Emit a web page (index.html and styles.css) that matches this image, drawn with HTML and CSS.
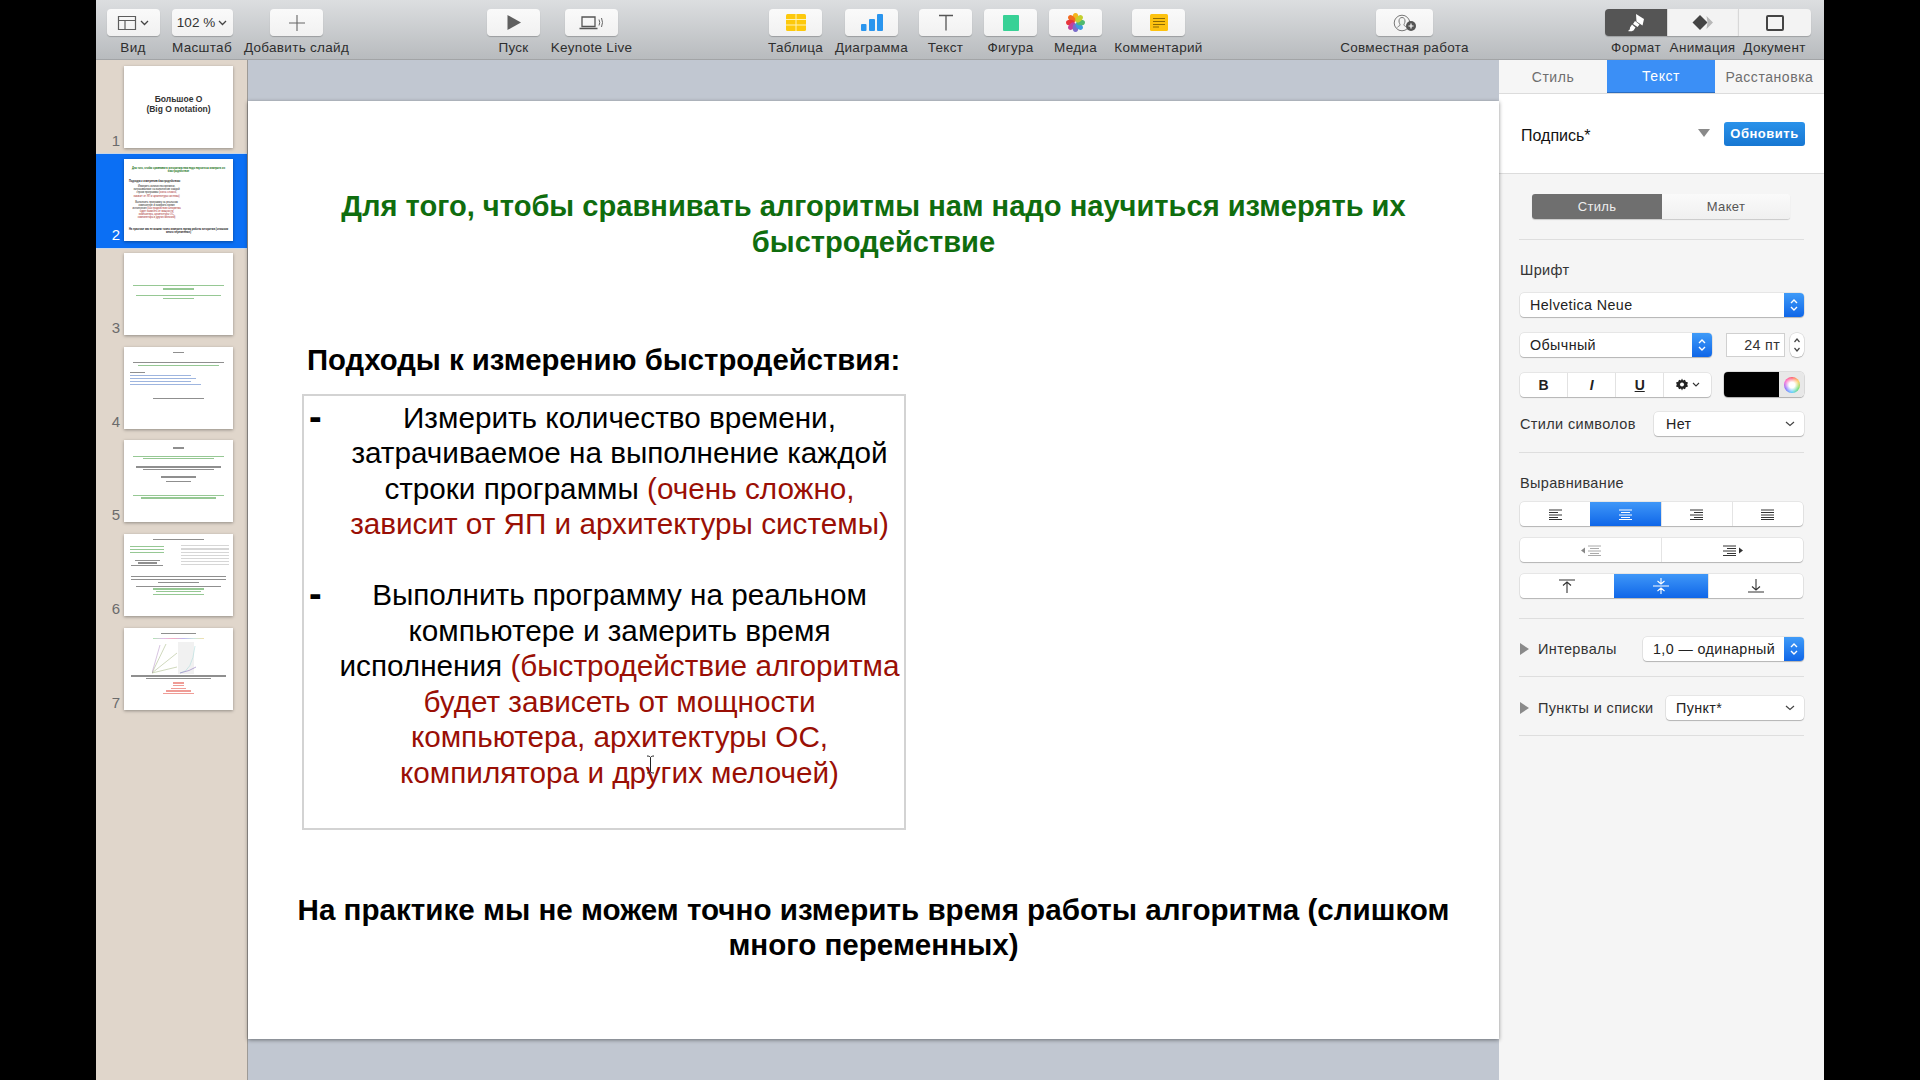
FILE: index.html
```html
<!DOCTYPE html>
<html lang="ru">
	<head>
		<meta charset="UTF-8">
		<title>Keynote</title>
		<link rel="stylesheet" href="styles.css">
	</head>
	<body>
		<div class="window">
			<!-- toolbar -->
			<header class="toolbar">
				<div class="tb-group tb-left">
					<div class="tool">
						<div class="tb-btn">
							<svg width="20" height="18" viewBox="0 0 20 18"><path d="M1.5 2.500h17v13h-17zM1.500 6.500h17M8 6.500v9" fill="none" stroke="#5d5d5d" stroke-width="1.2"/></svg>
							<svg class="chev" width="9" height="6" viewBox="0 0 9 6"><path d="M1 1l3.500 3.500L8 1" fill="none" stroke="#444" stroke-width="1.3"/></svg>
						</div>
						<span>Вид</span>
					</div>
					<div class="tool">
						<div class="tb-btn wide">102 %<svg class="chev" width="9" height="6" viewBox="0 0 9 6"><path d="M1 1l3.500 3.500L8 1" fill="none" stroke="#444" stroke-width="1.3"/></svg></div>
						<span>Масштаб</span>
					</div>
					<div class="tool">
						<div class="tb-btn">
							<svg width="18" height="18" viewBox="0 0 18 18"><path d="M9 1v16M1 9h16" stroke="#666" stroke-width="1.1"/></svg>
						</div>
						<span>Добавить слайд</span>
					</div>
				</div>
				<div class="tb-group tb-run">
					<div class="tool">
						<div class="tb-btn">
							<svg width="16" height="17" viewBox="0 0 16 17"><path d="M1.500 1l13.500 7.500L1.500 16z" fill="#5f5f5f"/></svg>
						</div>
						<span>Пуск</span>
					</div>
					<div class="tool">
						<div class="tb-btn">
							<svg width="28" height="16" viewBox="0 0 28 16"><path d="M4 2h13v9.500H4z" fill="none" stroke="#555" stroke-width="1.3"/><path d="M1.500 13.500h18" stroke="#555" stroke-width="1.5"/><path d="M21 4.500q1.500 3 0 6M23.500 3q2 4.500 0 9" fill="none" stroke="#666"/></svg>
						</div>
						<span>Keynote Live</span>
					</div>
				</div>
				<div class="tb-group tb-insert">
					<div class="tool">
						<div class="tb-btn">
							<svg width="20" height="17" viewBox="0 0 20 17"><rect width="20" height="17" rx="1.500" fill="#fdc90c"/><path d="M0 5.500h20M0 11h20M10 0v17" stroke="#fff3b8"/></svg>
						</div>
						<span>Таблица</span>
					</div>
					<div class="tool">
						<div class="tb-btn">
							<svg width="22" height="17" viewBox="0 0 22 17"><rect y="10" width="5.500" height="7" rx="1" fill="#2a95ee"/><rect x="8" y="5" width="6" height="12" rx="1" fill="#2a95ee"/><rect x="16" width="6" height="17" rx="1" fill="#2a95ee"/></svg>
						</div>
						<span>Диаграмма</span>
					</div>
					<div class="tool">
						<div class="tb-btn">
							<svg width="16" height="17" viewBox="0 0 16 17"><path d="M1 1.500h14M8 1.500V16.500" stroke="#555" stroke-width="1.3" fill="none"/></svg>
						</div>
						<span>Текст</span>
					</div>
					<div class="tool">
						<div class="tb-btn"><div class="shape-ico"></div></div>
						<span>Фигура</span>
					</div>
					<div class="tool">
						<div class="tb-btn">
							<svg width="19" height="19" viewBox="-10 -10 20 20">
								<ellipse cy="-5.500" rx="3" ry="4.500" fill="#f4b41b"/>
								<ellipse cy="-5.500" rx="3" ry="4.500" fill="#f26b21" transform="rotate(315)"/>
								<ellipse cy="-5.500" rx="3" ry="4.500" fill="#e8353b" transform="rotate(270)"/>
								<ellipse cy="-5.500" rx="3" ry="4.500" fill="#c2409c" transform="rotate(225)"/>
								<ellipse cy="-5.500" rx="3" ry="4.500" fill="#7a6ccb" transform="rotate(180)"/>
								<ellipse cy="-5.500" rx="3" ry="4.500" fill="#3d9ae0" transform="rotate(135)"/>
								<ellipse cy="-5.500" rx="3" ry="4.500" fill="#4fba6f" transform="rotate(90)"/>
								<ellipse cy="-5.500" rx="3" ry="4.500" fill="#c3cf2f" transform="rotate(45)"/>
							</svg>
						</div>
						<span>Медиа</span>
					</div>
					<div class="tool">
						<div class="tb-btn">
							<svg width="18" height="17" viewBox="0 0 18 17"><rect width="18" height="17" rx="1.500" fill="#fdc20f"/><path d="M3 4.500h12M3 7.500h12M3 10.500h12M3 13h6" stroke="#8d6a05"/></svg>
						</div>
						<span>Комментарий</span>
					</div>
				</div>
				<div class="tb-group tb-collab">
					<div class="tool">
						<div class="tb-btn wide-2">
							<svg width="24" height="18" viewBox="0 0 24 18"><circle cx="9" cy="9" r="7.800" fill="none" stroke="#777"/><path d="M9 3.500c2 0 3 1.500 3 3.500 0 2-1 3-1.200 4 .5 1 2.500 1.500 3 2.500M9 3.500c-2 0-3 1.500-3 3.500 0 2 1 3 1.200 4-.5 1-2.500 1.500-3 2.500" fill="none" stroke="#777"/><circle cx="18" cy="12" r="5" fill="#555"/><path d="M15.500 12h5M18 9.500v5" stroke="#fff" stroke-width="1.200"/></svg>
						</div>
						<span>Совместная работа</span>
					</div>
				</div>
				<div class="tb-group tb-panels">
					<div class="tool">
						<div class="panel-btn on first">
							<svg width="20" height="20" viewBox="0 0 20 20"><path d="M10 1l8 5-1.500 6.500-6-4z" fill="#fff"/><path d="M9 8l4.500 3.500-2 2.500-4.500-3zM6 11.500l3.500 3-2 3c-1.500 1-4.500 1-5.500.5 1.500-1 2-1.500 2-3.500z" fill="#fff"/></svg>
						</div>
						<span>Формат</span>
					</div>
					<div class="tool">
						<div class="panel-btn">
							<svg width="22" height="15" viewBox="0 0 22 15"><path d="M8 0l7.500 7.500L8 15 .5 7.500z" fill="#444"/><path d="M14.500 1l6.500 6.500-6.500 6.500 1-6.500z" fill="#b8b8b8"/></svg>
						</div>
						<span>Анимация</span>
					</div>
					<div class="tool">
						<div class="panel-btn last">
							<svg width="18" height="16" viewBox="0 0 18 16"><rect x="1" y="1" width="16" height="14" rx="1" fill="none" stroke="#444" stroke-width="2"/></svg>
						</div>
						<span>Документ</span>
					</div>
				</div>
			</header>

			<div class="main">
				<!-- slide list -->
				<aside class="slides">
					<div class="row">
						<span class="num">1</span>
						<div class="thumb thumb-first">Большое О<br>(Big O notation)</div>
					</div>
					<div class="row selected">
						<span class="num">2</span>
						<div class="thumb thumb-two">
							<p class="t-green">Для того, чтобы сравнивать алгоритмы нам надо научиться измерять их<br>быстродействие</p>
							<p class="t-sub">Подходы к измерению быстродействия:</p>
							<p class="t-body">Измерить количество времени,<br>затрачиваемое на выполнение каждой<br>строки программы <i>(очень сложно,<br>зависит от ЯП и архитектуры системы)</i><br><br>Выполнить программу на реальном<br>компьютере и замерить время<br>исполнения <i>(быстродействие алгоритма<br>будет зависеть от мощности<br>компьютера, архитектуры ОС,<br>компилятора и других мелочей)</i></p>
							<p class="t-foot">На практике мы не можем точно измерить время работы алгоритма (слишком<br>много переменных)</p>
						</div>
					</div>
					<div class="row">
						<span class="num">3</span>
						<div class="thumb">
							<b class="gl green w90 m30"></b><b class="gl green w30 m2"></b>
							<b class="gl green w85 m5"></b><b class="gl green w30 m2"></b>
						</div>
					</div>
					<div class="row">
						<span class="num">4</span>
						<div class="thumb">
							<b class="gl black w10 m5"></b>
							<b class="gl black w90 m9"></b><b class="gl green w80 m1"></b>
							<b class="gl black w15 left m6"></b>
							<b class="gl blue w60 left m2"></b><b class="gl blue w65 left m1"></b>
							<b class="gl blue w60 left m2"></b><b class="gl blue w70 left m1"></b>
							<b class="gl black w50 m13"></b>
						</div>
					</div>
					<div class="row">
						<span class="num">5</span>
						<div class="thumb">
							<b class="gl black w10 m7"></b>
							<b class="gl green w90 m7"></b><b class="gl green w70 m1"></b>
							<b class="gl black w85 m7"></b><b class="gl black w70 m1"></b>
							<b class="gl black w35 m6"></b><b class="gl black w25 m3"></b>
							<b class="gl green w90 m13"></b><b class="gl green w75 m1"></b>
						</div>
					</div>
					<div class="row">
						<span class="num">6</span>
						<div class="thumb thumb-six">
							<b class="gl black w50 m5"></b>
							<div class="six-cols">
								<div class="six-left">
									<b class="gl green w90"></b><b class="gl green w90 m1"></b><b class="gl green w90 m1"></b>
									<b class="gl black w65 m7"></b><b class="gl black w50 m1"></b><b class="gl black w85 m1"></b>
								</div>
								<div class="six-table">
									<b class="gl gray w100"></b><b class="gl gray w100 m2"></b><b class="gl gray w100 m2"></b>
									<b class="gl gray w100 m2"></b><b class="gl gray w100 m2"></b><b class="gl gray w100 m2"></b><b class="gl gray w100 m2"></b>
								</div>
							</div>
							<b class="gl black w95 m6"></b><b class="gl black w95 m1"></b><b class="gl black w40 m1"></b>
							<b class="gl black w85 m3"></b>
							<b class="gl green w50 m1"></b><b class="gl green w45 m1"></b><b class="gl green w50 m1"></b>
						</div>
					</div>
					<div class="row">
						<span class="num">7</span>
						<div class="thumb">
							<b class="gl black w35 m5"></b>
							<b class="gl rainbow w50 m4"></b>
							<svg class="mini-chart" width="54" height="32" viewBox="0 0 54 32">
								<rect x="26" width="16" height="32" fill="#f1f1f1"/>
								<path d="M0 31L14 2M0 31L25 11M0 31L25 25" fill="none" stroke="#9fb07b" stroke-width=".5"/>
								<path d="M0 31L8 3" fill="none" stroke="#b08bc2" stroke-width=".5"/>
								<path d="M28 31Q40 30 43 4" fill="none" stroke="#a5d8d8" stroke-width=".5"/>
								<path d="M28 31Q38 29 44 25" fill="none" stroke="#7b5fb5" stroke-width=".5"/>
							</svg>
							<b class="gl black w95 m1"></b><b class="gl black w65 m1"></b>
							<b class="gl red w10 m3"></b><b class="gl red w10 m1"></b><b class="gl red w15 m1"></b><b class="gl red w25 m1"></b><b class="gl red w30 m1"></b>
						</div>
					</div>
				</aside>

				<!-- slide canvas -->
				<main class="canvas">
					<section class="slide">
						<h1 class="slide-title">Для того, чтобы сравнивать алгоритмы нам надо научиться измерять их<br>быстродействие</h1>
						<h2 class="slide-sub">Подходы к измерению быстродействия:</h2>
						<div class="textbox">
							<div class="item">
								<span class="dash">-</span>
								<p>Измерить количество времени,<br>затрачиваемое на выполнение каждой<br>строки программы <em>(очень сложно,<br>зависит от ЯП и архитектуры системы)</em></p>
							</div>
							<div class="item item-gap">
								<span class="dash">-</span>
								<p>Выполнить программу на реальном<br>компьютере и замерить время<br>исполнения <em>(быстродействие алгоритма<br>будет зависеть от мощности<br>компьютера, архитектуры ОС,<br>компилятора и других мелочей)</em></p>
							</div>
						</div>
						<h2 class="slide-foot">На практике мы не можем точно измерить время работы алгоритма (слишком<br>много переменных)</h2>
						<svg class="ibeam" width="9" height="19" viewBox="0 0 9 19"><path d="M1 1c2 0 3 .5 3.500 1.500C5 1.500 6 1 8 1M4.500 2.500v14M1 18c2 0 3-.5 3.500-1.500C5 17.500 6 18 8 18" fill="none" stroke="#222"/></svg>
					</section>
				</main>

				<!-- inspector -->
				<aside class="inspector">
					<div class="tabs">
						<div class="tab t1">Стиль</div>
						<div class="tab t2 active">Текст</div>
						<div class="tab t3">Расстановка</div>
					</div>
					<div class="preset">
						<span class="preset-name">Подпись*</span>
						<i class="tri-down"></i>
						<button class="update">Обновить</button>
					</div>
					<div class="pane">
						<div class="seg seg-main">
							<div class="seg-cell dark">Стиль</div>
							<div class="seg-cell">Макет</div>
						</div>
						<hr class="sep sep-a">
						<div class="label label-font">Шрифт</div>
						<div class="select">Helvetica Neue<span class="stepper"><svg width="10" height="16" viewBox="0 0 10 16"><path d="M2 6l3-3 3 3M2 10l3 3 3-3" fill="none" stroke="#fff" stroke-width="1.400"/></svg></span></div>
						<div class="line line-style">
							<div class="select select-style">Обычный<span class="stepper"><svg width="10" height="16" viewBox="0 0 10 16"><path d="M2 6l3-3 3 3M2 10l3 3 3-3" fill="none" stroke="#fff" stroke-width="1.400"/></svg></span></div>
							<div class="size">24 пт</div>
							<div class="updown"><svg width="10" height="20" viewBox="0 0 10 20"><path d="M2.500 7l2.500-3 2.500 3M2.500 13l2.500 3 2.500-3" fill="none" stroke="#444" stroke-width="1.200"/></svg></div>
						</div>
						<div class="line line-biu">
							<div class="biu">
								<div class="biu-cell bold">B</div>
								<div class="biu-cell ital">I</div>
								<div class="biu-cell under">U</div>
								<div class="biu-cell">
									<svg width="26" height="15" viewBox="0 0 26 15"><path d="M7 1.500l1 2 2-.8.800 2 2.200.8-.8 2 .8 2-2.200.8-.8 2-2-.8-1 2-1-2-2 .8-.8-2-2.200-.8.8-2-.8-2 2.200-.8.800-2 2 .8z" fill="#222"/><circle cx="7" cy="7.500" r="2" fill="#fff"/><path d="M18 6l3 3 3-3" fill="none" stroke="#333" stroke-width="1.100"/></svg>
								</div>
							</div>
							<div class="swatch"><div class="swatch-black"></div><div class="swatch-wheel"><i></i></div></div>
						</div>
						<div class="line line-chars">
							<span class="label">Стили символов</span>
							<div class="select select-chars">Нет<svg class="sel-chev" width="10" height="6" viewBox="0 0 10 6"><path d="M1 1l4 3.500L9 1" fill="none" stroke="#444" stroke-width="1.200"/></svg></div>
						</div>
						<hr class="sep sep-b">
						<div class="label label-align">Выравнивание</div>
						<div class="btn-row">
							<div class="cell"><svg width="13" height="11" viewBox="0 0 13 11"><path d="M0 1h13M0 3.500h9M0 6h13M0 8.500h9M0 10.500h13" stroke="#333"/></svg></div>
							<div class="cell on"><svg width="13" height="11" viewBox="0 0 13 11"><path d="M0 1h13M2 3.500h9M0 6h13M2 8.500h9M0 10.500h13" stroke="#fff"/></svg></div>
							<div class="cell"><svg width="13" height="11" viewBox="0 0 13 11"><path d="M0 1h13M4 3.500h9M0 6h13M4 8.500h9M0 10.500h13" stroke="#333"/></svg></div>
							<div class="cell"><svg width="13" height="11" viewBox="0 0 13 11"><path d="M0 1h13M0 3.500h13M0 6h13M0 8.500h13M0 10.500h13" stroke="#333"/></svg></div>
						</div>
						<div class="btn-row">
							<div class="cell"><svg width="20" height="11" viewBox="0 0 20 11"><path d="M0 5.500L4 2.500v6z" fill="#888"/><path d="M7 1h13M9 3.500h9M7 6h13M9 8.500h9M7 10.500h13" stroke="#aaa"/></svg></div>
							<div class="cell"><svg width="20" height="11" viewBox="0 0 20 11"><path d="M20 5.500L16 2.500v6z" fill="#333"/><path d="M0 1h13M4 3.500h9M0 6h13M4 8.500h9M0 10.500h13" stroke="#333"/></svg></div>
						</div>
						<div class="btn-row">
							<div class="cell"><svg width="16" height="14" viewBox="0 0 16 14"><path d="M0 1h16M8 14V3M4 6.500L8 3l4 3.500" fill="none" stroke="#333" stroke-width="1.100"/></svg></div>
							<div class="cell on"><svg width="16" height="16" viewBox="0 0 16 16"><path d="M0 8h16M8 0v6M8 10v6M4.500 3L8 6l3.500-3M4.500 13L8 10l3.500 3" fill="none" stroke="#fff" stroke-width="1.100"/></svg></div>
							<div class="cell"><svg width="16" height="14" viewBox="0 0 16 14"><path d="M0 13h16M8 0v11M4 7.500L8 11l4-3.500" fill="none" stroke="#333" stroke-width="1.100"/></svg></div>
						</div>
						<hr class="sep sep-c">
						<div class="line line-disc">
							<i class="tri-right"></i>
							<span class="label">Интервалы</span>
							<div class="select select-spacing">1,0 — одинарный<span class="stepper"><svg width="10" height="16" viewBox="0 0 10 16"><path d="M2 6l3-3 3 3M2 10l3 3 3-3" fill="none" stroke="#fff" stroke-width="1.400"/></svg></span></div>
						</div>
						<hr class="sep sep-d">
						<div class="line line-disc">
							<i class="tri-right"></i>
							<span class="label">Пункты и списки</span>
							<div class="select select-bullet">Пункт*<svg class="sel-chev" width="10" height="6" viewBox="0 0 10 6"><path d="M1 1l4 3.500L9 1" fill="none" stroke="#444" stroke-width="1.200"/></svg></div>
						</div>
						<hr class="sep sep-e">
					</div>
				</aside>
			</div>
		</div>
	</body>
</html>
```

FILE: styles.css
```css
*{
	padding: 0;
	margin: 0;
	box-sizing: border-box;
}
html,body{
	width: 100%;
	height: 100%;
	background: #000;
	overflow: hidden;
	font-family: "Liberation Sans", "Noto Sans", sans-serif;
}
.window{
	width: 1728px;
	height: 1080px;
	margin-left: 96px;
	display: flex;
	flex-direction: column;
}

/* toolbar */
.toolbar{
	height: 60px;
	padding: 9px 0 0 11px;
	display: flex;
	background: linear-gradient(#dcdee0, #b8bbbe);
	border-bottom: 1px solid #a2a4a6;
	flex: none;
}
.tb-group{
	display: grid;
}
.tb-left{
	grid-template-columns: 52px 86px 103px;
}
.tb-run{
	margin-left: 135.5px;
	grid-template-columns: 60px 96px;
}
.tb-insert{
	margin-left: 121px;
	grid-template-columns: 70px 82px 66px 64px 66px 100px;
}
.tb-collab{
	margin-left: 126px;
	grid-template-columns: 140px;
}
.tb-panels{
	margin-left: 130.5px;
	grid-template-columns: 62px 71px 73px;
}
.tool{
	display: flex;
	flex-direction: column;
	align-items: center;
	font-size: 13.500px;
	letter-spacing: .3px;
	color: #2e2e2e;
	white-space: nowrap;
}
.tool span{
	margin-top: 4px;
	line-height: 16px;
}
.tb-btn{
	width: 53px;
	height: 27px;
	background: linear-gradient(#fafafa, #f1f1f1);
	border-radius: 4px;
	box-shadow: 0 1px 1px rgba(0,0,0,.22);
	display: flex;
	align-items: center;
	justify-content: center;
	color: #333;
	font-size: 13.500px;
	letter-spacing: 0;
	flex: none;
}
.tb-btn.wide{
	width: 61px;
}
.tb-btn.wide-2{
	width: 57px;
}
.chev{
	margin-left: 3px;
}
.shape-ico{
	width: 16px;
	height: 16px;
	border-radius: 1px;
	background: #38d196;
}
.panel-btn{
	width: 100%;
	height: 27px;
	background: #f3f3f3;
	box-shadow: 0 1px 1px rgba(0,0,0,.2);
	border-left: 1px solid #d8d8d8;
	display: flex;
	align-items: center;
	justify-content: center;
	flex: none;
}
.panel-btn.on{
	background: #555;
	border-left: 0;
}
.panel-btn.first{
	border-radius: 4px 0 0 4px;
}
.panel-btn.last{
	border-radius: 0 4px 4px 0;
}

.main{
	flex: 1;
	display: flex;
	min-height: 0;
}

/* slide list */
.slides{
	width: 152px;
	flex: none;
	background: #e0d6cb;
	border-right: 1px solid #9d9a96;
}
.row{
	height: 93.6px;
	padding: 6px 0 0 28px;
	position: relative;
}
.row.selected{
	background: #0b6ff4;
	border-top: 1px solid #c9d6e6;
	border-bottom: 1px solid #c9d6e6;
	margin-top: -1px;
	margin-bottom: -2px;
	padding-top: 5.500px;
	height: 96.600px;
}
.num{
	position: absolute;
	left: 0;
	width: 24px;
	top: 72px;
	text-align: right;
	font-size: 15px;
	line-height: 17px;
	color: #6b6b6b;
}
.row.selected .num{
	color: #fff;
}
.thumb{
	width: 109px;
	height: 82px;
	background: #fff;
	box-shadow: 0 1px 3px rgba(0,0,0,.35);
	display: flex;
	flex-direction: column;
	align-items: center;
	padding: 0 4px;
}
.thumb-first{
	display: block;
	padding-top: 28px;
	text-align: center;
	font-size: 8.500px;
	line-height: 10px;
	font-weight: bold;
	color: #333;
}
.thumb-two{
	text-align: center;
	font-size: 2.550px;
	line-height: 3.100px;
	white-space: nowrap;
	color: #222;
	padding-top: 7.700px;
}
.thumb-two i{
	font-style: normal;
	color: #a8281f;
}
.t-green{
	color: #0f6d0e;
	font-weight: bold;
}
.t-sub{
	font-weight: bold;
	align-self: flex-start;
	margin: 7.250px 0 0 1px;
}
.t-body{
	align-self: flex-start;
	width: 50px;
	margin: 1.950px 0 0 3.600px;
}
.t-foot{
	font-weight: bold;
	margin-top: 8.800px;
}
.gl{
	display: block;
	height: 1.200px;
	flex: none;
	opacity: .55;
}
.gl.left{
	align-self: flex-start;
	margin-left: 2px;
}
.gl.green{ background: #3f9a3d; }
.gl.black{ background: #333; }
.gl.blue{ background: #4f78c4; }
.gl.gray{ background: #b5b5b5; }
.gl.red{ background: #e14a3f; }
.gl.rainbow{ background: linear-gradient(90deg, #6dcf73, #c98ad8, #e86a8d, #8a7ae0, #9fd0c8, #e6c86a); }
.w10{ width: 10%; }
.w15{ width: 15%; }
.w25{ width: 25%; }
.w30{ width: 30%; }
.w35{ width: 35%; }
.w40{ width: 40%; }
.w45{ width: 45%; }
.w50{ width: 50%; }
.w60{ width: 60%; }
.w65{ width: 65%; }
.w70{ width: 70%; }
.w75{ width: 75%; }
.w80{ width: 80%; }
.w85{ width: 85%; }
.w90{ width: 90%; }
.w95{ width: 95%; }
.w100{ width: 100%; }
.m1{ margin-top: 1.500px; }
.m2{ margin-top: 2px; }
.m3{ margin-top: 3px; }
.m4{ margin-top: 4px; }
.m5{ margin-top: 5px; }
.m6{ margin-top: 6px; }
.m7{ margin-top: 7px; }
.m9{ margin-top: 9px; }
.m13{ margin-top: 13px; }
.m30{ margin-top: 32px; }
.six-cols{
	width: 100%;
	display: flex;
	justify-content: space-between;
	margin-top: 4px;
	height: 26px;
}
.six-left{
	width: 38%;
	display: flex;
	flex-direction: column;
	align-items: center;
	padding-top: 2px;
}
.six-table{
	width: 48%;
	padding-top: 1px;
}
.mini-chart{
	margin-top: 3px;
	flex: none;
}

/* canvas */
.canvas{
	flex: 1;
	background: #c1c7d1;
	padding-top: 41px;
	min-width: 0;
}
.slide{
	width: 100%;
	height: 938px;
	background: #fff;
	box-shadow: 0 1px 4px rgba(0,0,0,.45);
	padding-top: 88px;
	position: relative;
	display: flex;
	flex-direction: column;
	align-items: flex-start;
	color: #000;
}
.slide-title,.slide-foot{
	width: 100%;
	line-height: 35.500px;
	font-weight: bold;
	text-align: center;
	white-space: nowrap;
}
.slide-title{
	font-size: 29.100px;
	color: #0f6d0e;
}
.slide-sub{
	font-size: 29.300px;
	line-height: 35.500px;
	font-weight: bold;
	white-space: nowrap;
	margin: 82px 0 16px 59px;
}
.textbox{
	width: 604px;
	height: 436px;
	margin-left: 54px;
	border: 2px solid #d3d3d3;
	padding-top: 4px;
}
.item{
	display: flex;
	font-size: 29.700px;
	line-height: 35.500px;
	white-space: nowrap;
}
.item-gap{
	margin-top: 35.500px;
}
.dash{
	width: 31px;
	flex: none;
	padding-left: 5px;
	font-size: 38px;
	font-weight: bold;
}
.item p{
	flex: 1;
	text-align: center;
}
.item em{
	font-style: normal;
	color: #9a0f05;
}
.slide-foot{
	font-size: 29.600px;
	margin-top: 62px;
}
.ibeam{
	position: absolute;
	left: 398px;
	top: 654px;
}

/* inspector */
.inspector{
	width: 325px;
	flex: none;
	background: #f5f5f5;
	display: flex;
	flex-direction: column;
}
.tabs{
	height: 34px;
	display: flex;
	background: #f6f6f6;
	border-bottom: 1px solid #dcdcdc;
	font-size: 14px;
	letter-spacing: .55px;
	color: #6e6e6e;
}
.tab{
	display: flex;
	align-items: center;
	justify-content: center;
}
.t1{
	width: 108px;
}
.t2{
	width: 108px;
}
.t3{
	width: 109px;
}
.tab.active{
	background: #3b8ff6;
	color: #fff;
	border-bottom: 1px solid #2a6cc0;
}
.preset{
	height: 80px;
	background: #fff;
	border-bottom: 1px solid #dcdcdc;
	display: flex;
	align-items: center;
	padding: 0 19px 0 22px;
}
.preset-name{
	font-size: 16px;
	color: #111;
	margin-top: 5px;
}
.tri-down{
	width: 0;
	height: 0;
	border: 6.500px solid transparent;
	border-top: 8px solid #8a8a8a;
	border-bottom: 0;
	margin-left: auto;
	margin-right: 14px;
	margin-top: -2px;
}
.update{
	width: 81px;
	height: 24px;
	border: 0;
	border-radius: 3px;
	background: linear-gradient(#2a92ea, #1777d2);
	color: #fff;
	font: bold 13px "Liberation Sans", sans-serif;
	letter-spacing: .5px;
}
.pane{
	padding: 20px 20px 0 21px;
	color: #333;
	font-size: 14px;
}
.seg{
	display: flex;
	height: 25px;
	margin: 0 14px 0 12px;
	border-radius: 3px;
	box-shadow: 0 1px 1px rgba(0,0,0,.18);
	background: linear-gradient(#fafafa, #f0f0f0);
	overflow: hidden;
	font-size: 13px;
	letter-spacing: .3px;
	color: #555;
}
.seg-cell{
	flex: 1;
	display: flex;
	align-items: center;
	justify-content: center;
}
.seg-cell.dark{
	background: #6f6f6f;
	color: #eee;
	flex: none;
	width: 130px;
}
.sep{
	border: 0;
	height: 1px;
	background: #dedede;
	margin-left: -1px;
}
.sep-a{
	margin-top: 20px;
}
.sep-b{
	margin-top: 16px;
}
.sep-c{
	margin-top: 20px;
}
.sep-d{
	margin-top: 15px;
}
.sep-e{
	margin-top: 15px;
}
.label{
	font-size: 14.500px;
	letter-spacing: .35px;
	color: #333;
	white-space: nowrap;
}
.label-font{
	line-height: 16px;
	margin-top: 22px;
	margin-bottom: 15px;
}
.label-align{
	line-height: 16px;
	margin-top: 22px;
	margin-bottom: 11px;
}
.select{
	height: 24px;
	width: 100%;
	position: relative;
	background: #fff;
	border-radius: 4px;
	box-shadow: 0 0 0 .5px rgba(0,0,0,.12), 0 1px 1px rgba(0,0,0,.22);
	font-size: 14.300px;
	letter-spacing: .4px;
	color: #222;
	padding-left: 10px;
	line-height: 24px;
	white-space: nowrap;
	overflow: hidden;
	flex: none;
}
.stepper{
	position: absolute;
	right: 0;
	top: 0;
	width: 20px;
	height: 24px;
	background: linear-gradient(#3f9bf8, #0f66e8);
	display: flex;
	align-items: center;
	justify-content: center;
}
.sel-chev{
	position: absolute;
	right: 9px;
	top: 9px;
}
.line{
	display: flex;
	align-items: center;
}
.line-style{
	margin-top: 16px;
}
.select-style{
	width: 192px;
}
.size{
	width: 59px;
	height: 24px;
	margin-left: 14px;
	background: #fff;
	border: 1px solid #d0d0d0;
	font-size: 14.300px;
	letter-spacing: .3px;
	text-align: right;
	padding-right: 4px;
	line-height: 23px;
}
.updown{
	width: 14px;
	height: 24px;
	margin-left: 5px;
	background: #fff;
	border-radius: 6px;
	box-shadow: 0 0 0 .5px rgba(0,0,0,.15), 0 1px 1px rgba(0,0,0,.2);
	display: flex;
	align-items: center;
	justify-content: center;
}
.line-biu{
	margin-top: 15px;
}
.biu{
	width: 192px;
	height: 24px;
	display: flex;
	background: #fff;
	border-radius: 4px;
	box-shadow: 0 0 0 .5px rgba(0,0,0,.12), 0 1px 1px rgba(0,0,0,.22);
	font-size: 14px;
	color: #222;
	overflow: hidden;
}
.biu-cell{
	flex: 1;
	display: flex;
	align-items: center;
	justify-content: center;
	border-left: 1px solid #e2e2e2;
}
.biu-cell:first-child{
	border-left: 0;
}
.bold{
	font-weight: bold;
}
.ital{
	font-style: italic;
	font-weight: bold;
}
.under{
	font-weight: bold;
	text-decoration: underline;
}
.swatch{
	width: 80px;
	height: 25px;
	margin-left: 13px;
	display: flex;
	border-radius: 4px;
	overflow: hidden;
	box-shadow: 0 0 0 .5px rgba(0,0,0,.2), 0 1px 1px rgba(0,0,0,.2);
}
.swatch-black{
	width: 55px;
	background: #000;
}
.swatch-wheel{
	flex: 1;
	background: #e8e8e8;
	display: flex;
	align-items: center;
	justify-content: center;
}
.swatch-wheel i{
	width: 16px;
	height: 16px;
	border-radius: 50%;
	background: radial-gradient(#fff 25%, transparent 70%), conic-gradient(#f56, #fc5, #6d6, #5cf, #86f, #f6c, #f56);
	display: flex;
}
.line-chars{
	margin-top: 15px;
	justify-content: space-between;
}
.select-chars{
	width: 150px;
	padding-left: 12px;
}
.btn-row{
	width: 283px;
	height: 24px;
	display: flex;
	background: #fff;
	border-radius: 4px;
	box-shadow: 0 0 0 .5px rgba(0,0,0,.12), 0 1px 1px rgba(0,0,0,.22);
	overflow: hidden;
	margin-bottom: 12px;
}
.cell{
	flex: 1;
	display: flex;
	align-items: center;
	justify-content: center;
	border-left: 1px solid #e4e4e4;
}
.cell:first-child{
	border-left: 0;
}
.cell.on{
	background: linear-gradient(#3f97f8, #0f66e8);
	border-left: 0;
}
.line-disc{
	margin-top: 19px;
}
.sep-c + .line-disc{
	margin-top: 18px;
}
.sep-d + .line-disc{
	margin-top: 19px;
}
.tri-right{
	width: 0;
	height: 0;
	border: 6px solid transparent;
	border-left: 9px solid #8a8a8a;
	border-right: 0;
	margin-right: 9px;
}
.select-spacing{
	width: 161px;
	margin-left: auto;
}
.select-bullet{
	width: 138px;
	margin-left: auto;
}
```
